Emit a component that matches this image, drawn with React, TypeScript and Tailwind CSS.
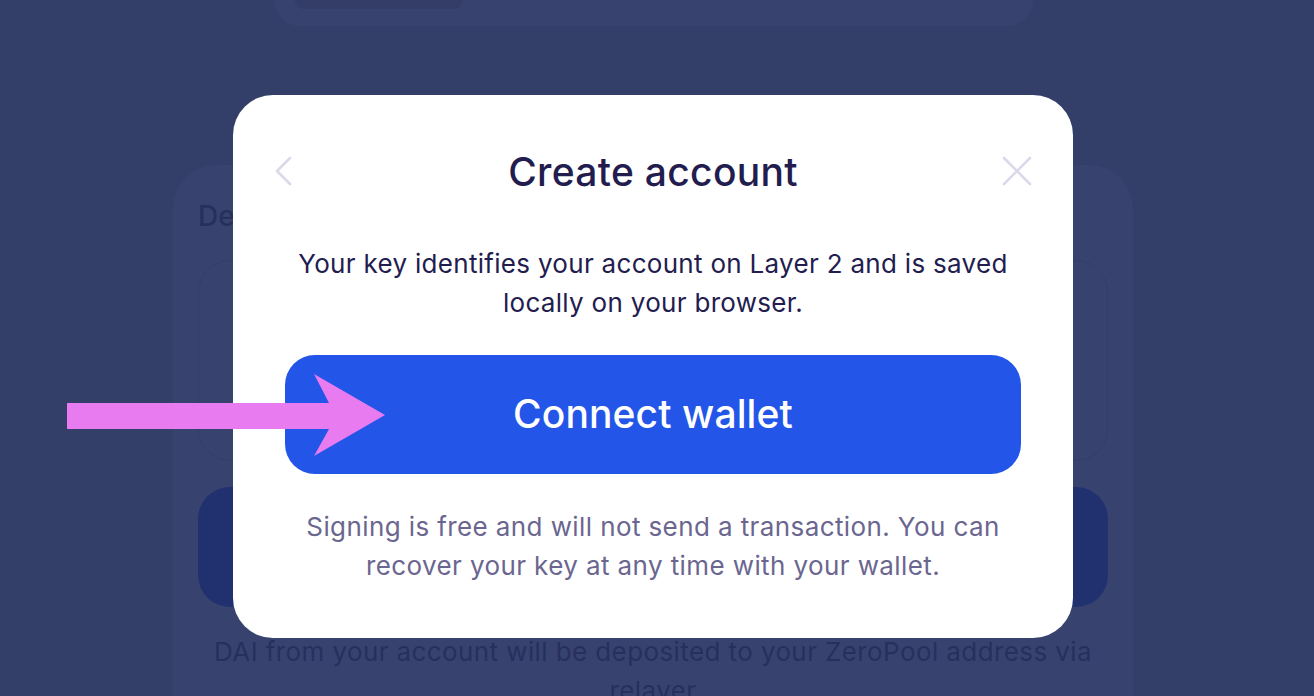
const font = { fontFamily: 'Inter, "Noto Sans", sans-serif' }

function Background() {
  return (
    <div className="w-[1306px] flex flex-col items-center">
      {/* Top card (cut off) */}
      <div className="w-[759px] h-[26px] rounded-b-[30px] bg-[#37436e] flex pl-[21px]">
        <div className="w-[168px] h-[9px] rounded-b-[16px] bg-[#333d67]" />
      </div>

      {/* Deposit card */}
      <div className="mt-[139px] w-[960px] h-[600px] rounded-t-[44px] bg-[#37436e] px-[25px] pt-[34px]">
        <h2 className="text-[28px] leading-[34px] font-medium text-[#27305d]">Deposit</h2>
        <div className="mt-[27px] h-[201px] rounded-[32px] border border-[#333e68]" />
        <div className="mt-[26px] h-[120px] rounded-[32px] bg-[#213170]" />
        <p className="mt-[25px] px-[16px] text-center text-[26px] leading-[39px] tracking-[0.4px] text-[#27305d]">
          DAI from your account will be deposited to your ZeroPool address via relayer
        </p>
      </div>
    </div>
  )
}

function Arrow() {
  return (
    <svg className="absolute left-0 top-0" width="400" height="470" viewBox="0 0 400 470">
      <polygon
        points="67,403 329,403 314,374 385,415 314,456 329,429 67,429"
        fill="#e87bf0"
      />
    </svg>
  )
}

function Modal() {
  return (
    <div className="ml-[233px] mt-[95px] w-[840px] h-[543px] rounded-[40px] bg-white px-[42px] pt-[57px]">
      <div className="h-[40px] flex items-center justify-between">
        <div className="w-[30px] flex justify-start">
          <svg width="18" height="30" viewBox="0 0 18 30" fill="none" className="-mt-[2px] -ml-[1px]">
            <polyline points="16,2 3,15 16,28" stroke="#dad8e9" strokeWidth="2.6" strokeLinecap="round" strokeLinejoin="round" />
          </svg>
        </div>
        <h1 className="text-[39px] leading-[40px] font-medium tracking-[0.3px] text-[#231d4f]">Create account</h1>
        <div className="w-[30px] flex justify-end">
          <svg width="30" height="30" viewBox="0 0 30 30" fill="none" className="-mr-[1px] -mt-[2px]">
            <path d="M2 2 L28 28 M28 2 L2 28" stroke="#dad8e9" strokeWidth="2.6" strokeLinecap="round" />
          </svg>
        </div>
      </div>
      <div className="px-[10px]">
        <p className="mt-[52px] text-center text-[26px] leading-[39px] tracking-[0.3px] text-[#231d4f]">
          Your key identifies your account on Layer 2 and is saved
          <br />
          locally on your browser.
        </p>
        <button className="mt-[33px] w-full h-[119px] rounded-[30px] bg-[#2356e8] text-white text-[39px] font-medium tracking-[0.1px]">
          Connect wallet
        </button>
        <p className="mt-[33px] text-center text-[26px] leading-[39px] tracking-[0.4px] text-[#6b6690]">
          Signing is free and will not send a transaction. You can
          <br />
          recover your key at any time with your wallet.
        </p>
      </div>
    </div>
  )
}

export default function App() {
  return (
    <div className="relative w-full h-[696px] overflow-hidden bg-[#343f69]" style={font}>
      <Background />
      <div className="absolute inset-0">
        <Modal />
      </div>
      <Arrow />
    </div>
  )
}
